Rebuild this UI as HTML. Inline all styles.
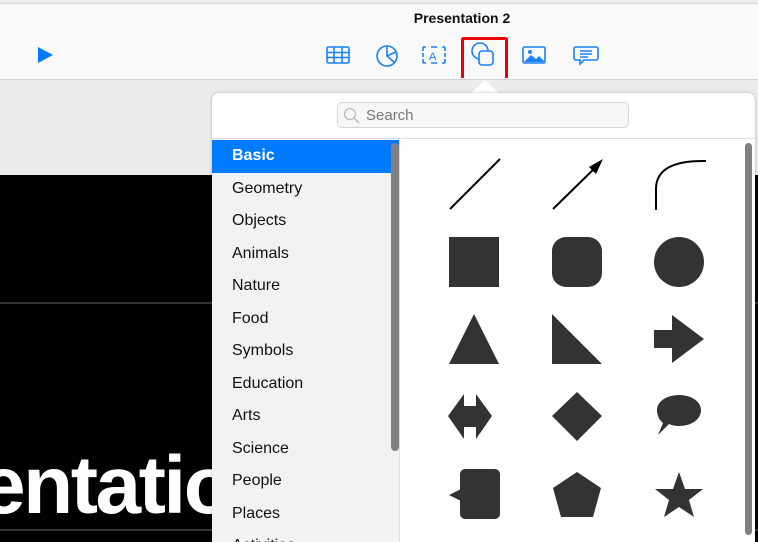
<!DOCTYPE html>
<html><head><style>
*{margin:0;padding:0;box-sizing:border-box}
html,body{width:758px;height:542px;overflow:hidden}
body{position:relative;background:#ececec;font-family:"Liberation Sans",sans-serif}
.tb{position:absolute;left:0;top:3px;width:758px;height:77px;background:#f9f9f9;border-top:1px solid #d8d8d8;border-bottom:1px solid #d4d4d4}
.title{position:absolute;top:6px;left:0;width:924px;text-align:center;font-size:14px;color:#111;font-weight:bold}
.slide{position:absolute;left:0;top:175px;width:758px;height:367px;background:#000}
.big{position:absolute;left:-20px;top:445px;font-size:82px;font-weight:bold;color:#fff;letter-spacing:-2.5px;line-height:1}
.pop{position:absolute;left:212px;top:93px;width:543px;height:449px;background:#fff;border-radius:7px 7px 0 0;box-shadow:0 0 3px rgba(0,0,0,.25);overflow:hidden}
.search{position:absolute;left:125px;top:9px;width:292px;height:26px;border:1px solid #d6d6d6;border-radius:5px;background:#f7f7f7;font-size:15px;color:#777;padding:4px 0 0 28px}
.side{position:absolute;left:0;top:45px;width:188px;height:410px;background:#f2f2f2;border-top:1px solid #ddd;border-right:1px solid #ddd;padding-top:1px}
.side .it{height:32.5px;line-height:32.5px;padding-left:20px;font-size:16px;color:#111}
.side .sel{background:#007aff;color:#fff;font-weight:bold}
.sb{position:absolute;left:179px;top:4px;width:8px;height:308px;border-radius:4px;background:#808080}
.grid{position:absolute;left:189px;top:45px;width:354px;height:410px;border-top:1px solid #ddd}
.sb2{position:absolute;left:344px;top:4px;width:7px;height:392px;border-radius:4px;background:#808080}
</style></head><body>
<div class="tb">
<div class="title">Presentation 2</div>
<svg width="758" height="77" style="position:absolute;left:0;top:-3px">
<path d="M38 46 L53 54 L38 62Z" fill="#007aff"/>
<g fill="none" stroke="#1a82f5" stroke-width="1.6">
<rect x="327" y="46" width="22" height="16" rx="1.5"/><path d="M327 51.5h22M327 56.5h22M334 46v16M342 46v16"/>
<circle cx="387" cy="55" r="10"/><path d="M387 45v10l7 6M387 55l9-4"/>
<path d="M423 46h3M431 46h6M442 46h3M423 62h3M431 62h6M442 62h3M423 46v4M423 58v4M445 46v4M445 58v4M423 52v4M445 52v4"/>
<text x="429" y="59" font-size="11" fill="#1a82f5" stroke="none" font-family="Liberation Sans">A</text>
<circle cx="480" cy="50" r="8"/><rect x="479" y="50" width="14" height="14" rx="3" fill="#f9f9f9"/>
<rect x="523" y="46" width="22" height="16" rx="1.5"/>
<path d="M576 46h20a2 2 0 0 1 2 2v9a2 2 0 0 1-2 2h-12l-4 4v-4h-4a2 2 0 0 1-2-2v-9a2 2 0 0 1 2-2zM580 50h12M580 53h12M580 56h8"/>
</g>
<path d="M524 61l7-7 5 4 3-3 6 6z" fill="#1a82f5"/><circle cx="530" cy="51" r="2" fill="#1a82f5"/>
<rect x="462.5" y="37.5" width="44" height="41" fill="none" stroke="#e00" stroke-width="3" rx="1"/>
</svg>
</div>
<div class="slide">
<div style="position:absolute;left:0;top:127px;width:758px;height:2px;background:#333"></div>
<div style="position:absolute;left:0;top:354px;width:758px;height:2px;background:#333"></div>
</div>
<div class="big">entatio</div>
<svg width="30" height="14" style="position:absolute;left:470px;top:80px"><path d="M0 14 L15 0 L30 14Z" fill="#fff"/></svg>
<div class="pop">
<div class="search">Search</div>
<svg width="20" height="20" style="position:absolute;left:130px;top:13px"><circle cx="8" cy="8" r="5.5" fill="none" stroke="#bbb" stroke-width="1.3"/><path d="M12 12l5 5" stroke="#bbb" stroke-width="1.5"/></svg>
<div class="side">
<div class="it sel">Basic</div><div class="it">Geometry</div><div class="it">Objects</div><div class="it">Animals</div><div class="it">Nature</div><div class="it">Food</div><div class="it">Symbols</div><div class="it">Education</div><div class="it">Arts</div><div class="it">Science</div><div class="it">People</div><div class="it">Places</div><div class="it">Activities</div>
<div class="sb"></div>
</div>
<div class="grid">
<svg width="354" height="410" style="position:absolute;left:0;top:-1px" viewBox="0 0 354 410">
<g transform="translate(-401,-139)">
<path d="M450 210L500 160" stroke="#000" stroke-width="2"/>
<path d="M553 210L598 166" stroke="#000" stroke-width="2"/><path d="M603 160L596 175L589 168Z" fill="#000"/>
<path d="M656 211V190Q656 161 706 162" fill="none" stroke="#000" stroke-width="2"/>
<g fill="#333">
<rect x="449" y="238" width="50" height="50"/>
<rect x="552" y="238" width="50" height="50" rx="14"/>
<circle cx="679" cy="263" r="25"/>
<path d="M474 315L499 365H449Z"/>
<path d="M552 315L602 365H552Z"/>
<path d="M654 331H672V316L704 340L672 364V349H654Z"/>
<path d="M448 417L464 395V407H476V395L492 417L476 440V428H464V440Z"/>
<path d="M577 393L602 417L577 442L552 417Z"/>
<path d="M679 396C692 396 701 403 701 411C701 420 692 427 679 427C675 427 671 426 669 425L658 436L663 424C659 421 657 416 657 411C657 403 666 396 679 396Z"/>
<rect x="460" y="470" width="40" height="50" rx="5"/><path d="M461 490L449 496L461 502Z"/>
<path d="M577 473L601 489L593 518H561L553 489Z"/>
<path d="M679 473L685 490H703L689 501L694 518L679 508L664 518L669 501L655 490H673Z"/>
</g></g></svg>
<div class="sb2"></div>
</div>
</div>
</body></html>
